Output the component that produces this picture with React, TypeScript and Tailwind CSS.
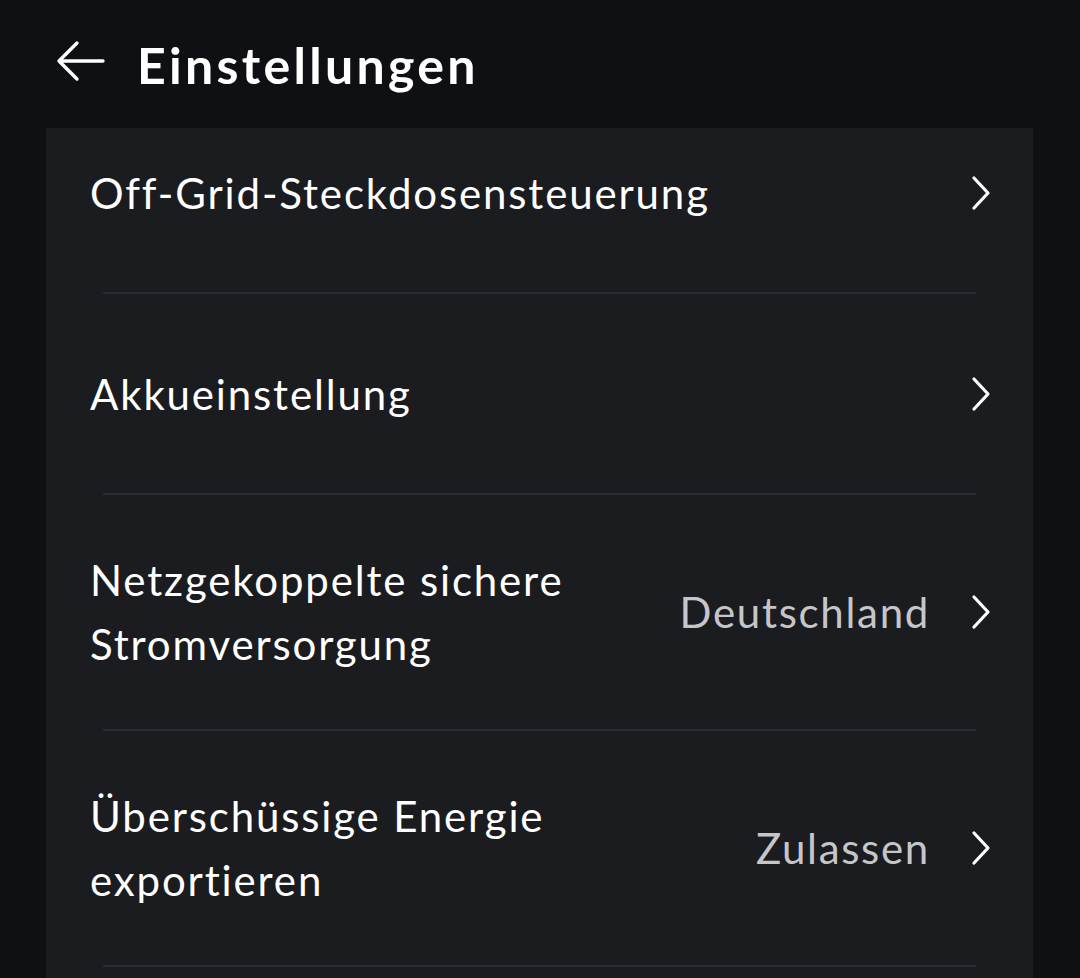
import React from "react";

function Chevron() {
  return (
    <svg width="22" height="36" viewBox="0 0 22 36" fill="none" className="shrink-0">
      <path d="M4 3 L18 18 L4 33" stroke="#ffffff" strokeWidth="3.2" strokeLinecap="round" strokeLinejoin="round" />
    </svg>
  );
}

function Row({ label, value, h, pb }: { label: React.ReactNode; value?: string; h: string; pb?: string }) {
  return (
    <div className={`flex items-center justify-between pl-[44px] pr-[41px] ${h} ${pb ?? ""}`}>
      <div className="text-[42px] leading-[64px] text-white tracking-[1.85px]">{label}</div>
      <div className="flex items-center gap-[40px]">
        {value && <span className="text-[42px] text-[#c6c6ca] tracking-[1.7px]">{value}</span>}
        <Chevron />
      </div>
    </div>
  );
}

function Divider() {
  return <div className="mx-[57px] h-[2px] bg-[#2b2c31]" />;
}

export default function App() {
  return (
    <div className="w-[1080px] h-[978px] overflow-hidden bg-[#0f1013]" style={{ fontFamily: "Lato, 'Noto Sans', sans-serif" }}>
      <div className="h-[128px] flex items-center pl-[55px] pb-[6px]">
        <svg width="52" height="44" viewBox="0 0 52 44" fill="none">
          <path d="M48 22 H4 M22 4 L4 22 L22 40" stroke="#ffffff" strokeWidth="3.4" strokeLinecap="round" strokeLinejoin="round" />
        </svg>
        <h1 className="ml-[30px] mt-[8px] text-[50px] font-bold text-white tracking-[3.3px]">Einstellungen</h1>
      </div>
      <div className="mx-[46px] w-[987px] bg-[#1b1c20] h-[850px]">
        <Row label="Off-Grid-Steckdosensteuerung" h="h-[164px]" pb="pb-[34px]" />
        <Divider />
        <Row label="Akkueinstellung" h="h-[199px]" />
        <Divider />
        <Row label={<>Netzgekoppelte sichere<br />Stromversorgung</>} value="Deutschland" h="h-[234px]" />
        <Divider />
        <Row label={<>Überschüssige Energie<br />exportieren</>} value="Zulassen" h="h-[234px]" />
        <Divider />
      </div>
    </div>
  );
}
